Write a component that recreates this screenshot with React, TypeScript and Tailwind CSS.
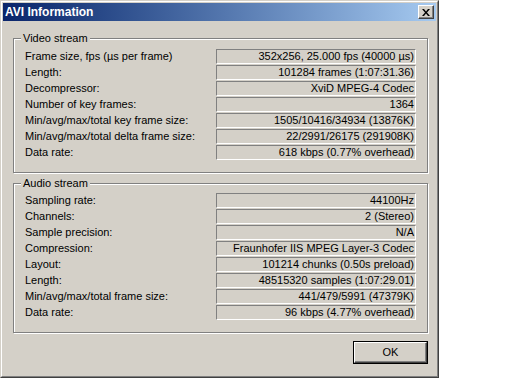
const video: [string, string][] = [
  ["Frame size, fps (µs per frame)", "352x256, 25.000 fps (40000 µs)"],
  ["Length:", "101284 frames (1:07:31.36)"],
  ["Decompressor:", "XviD MPEG-4 Codec"],
  ["Number of key frames:", "1364"],
  ["Min/avg/max/total key frame size:", "1505/10416/34934 (13876K)"],
  ["Min/avg/max/total delta frame size:", "22/2991/26175 (291908K)"],
  ["Data rate:", "618 kbps (0.77% overhead)"],
];

const audio: [string, string][] = [
  ["Sampling rate:", "44100Hz"],
  ["Channels:", "2 (Stereo)"],
  ["Sample precision:", "N/A"],
  ["Compression:", "Fraunhofer IIS MPEG Layer-3 Codec"],
  ["Layout:", "101214 chunks (0.50s preload)"],
  ["Length:", "48515320 samples (1:07:29.01)"],
  ["Min/avg/max/total frame size:", "441/479/5991 (47379K)"],
  ["Data rate:", "96 kbps (4.77% overhead)"],
];

function Group({ title, rows, className }: { title: string; rows: [string, string][]; className: string }) {
  return (
    <div
      className={`relative ml-[10px] mr-[8px] border border-[#808080] shadow-[inset_1px_1px_0_#fff,1px_1px_0_#fff] px-[11px] ${className}`}
    >
      <span className="absolute left-[7px] top-[-8px] bg-[#d4d0c8] px-[2px] leading-[14px]">{title}</span>
      <div className="flex flex-col gap-[1px]">
        {rows.map(([label, value]) => (
          <div key={label} className="flex items-center h-[15px]">
            <span className="flex-1 leading-[15px] whitespace-nowrap">{label}</span>
            <span className="w-[200px] h-[15px] border border-[#808080] border-b-white border-r-white text-right pr-[1px] leading-[13px] whitespace-nowrap">
              {value}
            </span>
          </div>
        ))}
      </div>
    </div>
  );
}

export default function App() {
  return (
    <div className="w-[512px] h-[384px] bg-white font-['Liberation_Sans',Arial,sans-serif] text-[11px] text-black">
      <div className="w-[439px] h-[378px] bg-[#d4d0c8] border border-[#d4d0c8] border-b-[#404040] border-r-[#404040]">
        <div className="h-full border border-white border-b-[#808080] border-r-[#808080] p-[1px] flex flex-col">
          <div className="h-[18px] bg-linear-to-r from-[#0a246a] to-[#a6caf0] flex items-center pl-[2px] pr-[2px]">
            <span className="flex-1 text-white font-bold text-[12px] leading-[18px]">AVI Information</span>
            <div className="w-[16px] h-[14px] bg-[#d4d0c8] border border-white border-b-[#404040] border-r-[#404040] shadow-[inset_-1px_-1px_0_#808080] flex items-center justify-center">
              <svg width="8" height="7" viewBox="0 0 8 7">
                <path d="M0 0h2l2 2.5L6 0h2L5 3.5 8 7H6L4 4.5 2 7H0l3-3.5z" fill="#000" />
              </svg>
            </div>
          </div>
          <Group title="Video stream" rows={video} className="mt-[17px] pt-[10px] pb-[12px]" />
          <Group title="Audio stream" rows={audio} className="mt-[10px] pt-[9px] pb-[12px]" />
          <div className="flex justify-end mr-[8px] mt-[8px]">
            <button className="w-[75px] h-[23px] border border-black bg-[#d4d0c8]">
              <div className="h-full border border-white border-b-[#404040] border-r-[#404040] shadow-[inset_-1px_-1px_0_#808080] flex items-center justify-center leading-[13px]">
                OK
              </div>
            </button>
          </div>
        </div>
      </div>
    </div>
  );
}
